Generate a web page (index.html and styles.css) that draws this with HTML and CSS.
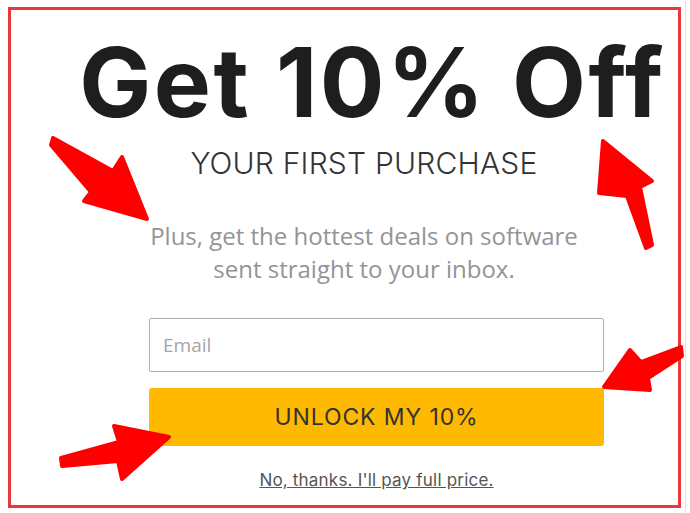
FILE: index.html
```html
<!DOCTYPE html>
<html>
<head>
    <title>Get 10% Off</title>
    <link rel="stylesheet" href="styles.css">
</head>
<body>
    <div class="page">
        <div class="popup">
            <h1 class="headline">Get 10% Off</h1>
            <h2 class="subhead">YOUR FIRST PURCHASE</h2>
            <p class="blurb">Plus, get the hottest deals on software<br>sent straight to your inbox.</p>

            <!-- Signup form -->
            <form class="signup" action="#" method="post">
                <input type="email" name="email" class="email" placeholder="Email">
                <button type="submit" class="unlock">UNLOCK MY 10%</button>
            </form>
            <a href="#" class="decline">No, thanks. I'll pay full price.</a>
        </div>

        <!-- Annotation arrows drawn over the popup -->
        <svg class="arrows" width="690" height="513" viewBox="0 0 690 513">
            <g fill="#ff0000" stroke="#ff0000" stroke-width="4" stroke-linejoin="round">
                <polygon points="53,138 113,171 122,157 147,219 84,201 91,192 51,145"/>
                <polygon points="603,141 652,181 640,187 652,245 646,248 627,196 599,193"/>
                <polygon points="604,387 630,350 641,362 681,347 682,356 648,378 650,390"/>
                <polygon points="169,437 114,426 119,442 61,458 62,466 118,461 122,479"/>
            </g>
        </svg>
    </div>
</body>
</html>
```

FILE: styles.css
```css
body {
    margin: 0;
    padding: 0;
    background: #fff;
    font-family: 'Inter', 'Liberation Sans', sans-serif;
}

.page {
    position: relative;
    width: 686px;
    height: 513px;
    padding: 7px 0 0 8px;
    box-sizing: border-box;
    border-right: 1px solid #e2e2e2;
}

.popup {
    width: 673px;
    height: 501px;
    box-sizing: border-box;
    border: 3px solid #e8383b;
    padding: 0 74px 0 138px;
    display: flex;
    flex-direction: column;
    align-items: center;
    text-align: center;
}

.headline {
    margin: 24px 8px 0 0;
    font-size: 96px;
    line-height: 96px;
    font-weight: 700;
    color: #1e1e1e;
    white-space: nowrap;
    letter-spacing: 2.4px;
}

.subhead {
    margin: 18px 25px 0 0;
    font-size: 30px;
    line-height: 30px;
    font-weight: 300;
    color: #333;
    white-space: nowrap;
    letter-spacing: 0.2px;
}

.blurb {
    margin: 41px 25px 0 0;
    font-family: 'Open Sans', sans-serif;
    font-size: 24px;
    line-height: 33px;
    color: #949494;
    white-space: nowrap;
}

.signup {
    margin: 33px 0 0;
    width: 100%;
    display: flex;
    flex-direction: column;
    gap: 16px;
}

.email {
    height: 54px;
    box-sizing: border-box;
    margin: 0;
    padding: 0 13px;
    border: 1px solid #aab0b8;
    border-radius: 2px;
    font-family: 'Open Sans', sans-serif;
    font-size: 19px;
    outline: none;
}

.email::placeholder {
    color: #a5a5a5;
}

.unlock {
    height: 58px;
    border: none;
    border-radius: 3px;
    background: #ffb900;
    color: #333;
    font-family: 'Inter', sans-serif;
    font-size: 23px;
    font-weight: 400;
    letter-spacing: 0.9px;
    cursor: pointer;
}

.decline {
    margin-top: 24px;
    font-size: 17px;
    line-height: 20px;
    color: #555;
    text-decoration: underline;
    letter-spacing: 0.2px;
}

.arrows {
    position: absolute;
    top: 0;
    left: 0;
}
```
